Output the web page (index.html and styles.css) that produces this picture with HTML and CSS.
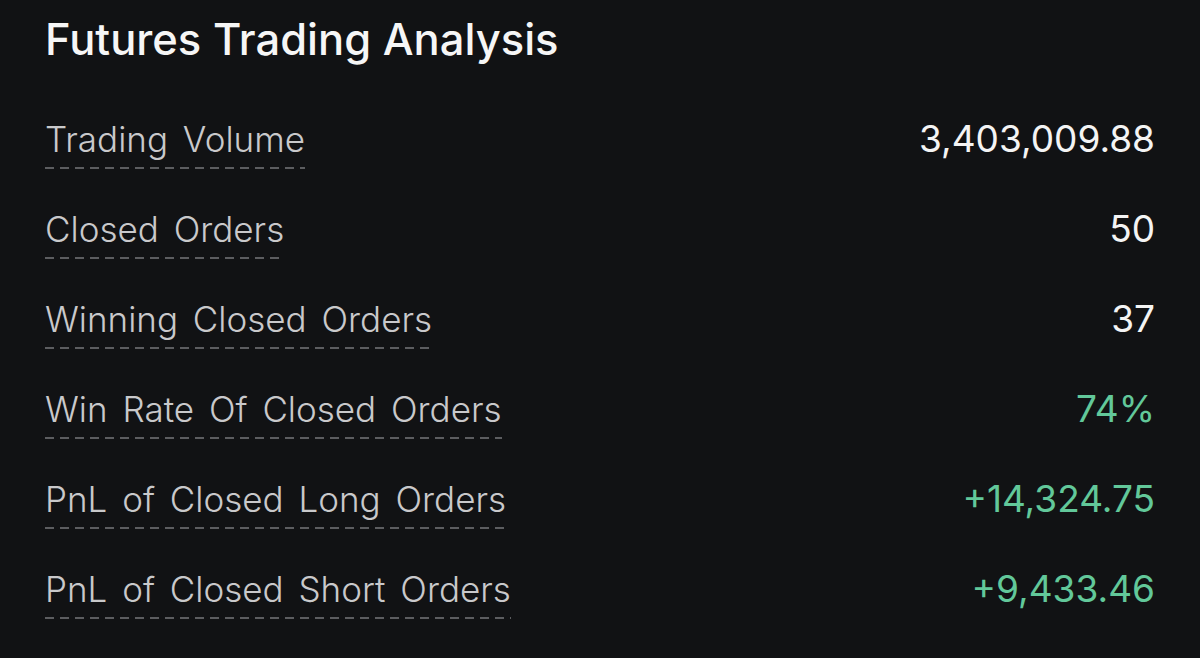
FILE: index.html
```html
<!DOCTYPE html>
<html lang="en">
<head>
<meta charset="utf-8">
<title>Futures Trading Analysis</title>
<link rel="stylesheet" href="styles.css">
</head>
<body>
<main class="panel">
  <h1 class="title">Futures Trading Analysis</h1>
  <ul class="stats">
    <li class="row"><span class="label">Trading Volume</span><span class="value">3,403,009.88</span></li>
    <li class="row"><span class="label">Closed Orders</span><span class="value">50</span></li>
    <li class="row"><span class="label">Winning Closed Orders</span><span class="value">37</span></li>
    <li class="row"><span class="label">Win Rate Of Closed Orders</span><span class="value up">74%</span></li>
    <li class="row"><span class="label">PnL of Closed Long Orders</span><span class="value up">+14,324.75</span></li>
    <li class="row"><span class="label">PnL of Closed Short Orders</span><span class="value up">+9,433.46</span></li>
  </ul>
</main>
</body>
</html>
```

FILE: styles.css
```css
html, body {
  margin: 0;
  padding: 0;
  background: #111214;
  height: 100%;
}
body {
  font-family: Inter, "Noto Sans", sans-serif;
  color: #f2f2f2;
}
.panel {
  padding: 13px 45px 0 45px;
}
.title {
  margin: 0;
  font-size: 43.5px;
  font-weight: 500;
  line-height: 52px;
  color: #f6f6f6;
}
.stats {
  list-style: none;
  margin: 52px 0 0 0;
  padding: 0;
}
.row {
  display: flex;
  justify-content: space-between;
  align-items: baseline;
  height: 90px;
}
.label {
  font-size: 35px;
  font-weight: 300;
  line-height: 44px;
  word-spacing: 5px;
  color: #c9c9cb;
  padding-bottom: 8px;
  background-image: repeating-linear-gradient(to right, #5c5d60 0 9px, transparent 9px 15px);
  background-size: 100% 2px;
  background-repeat: no-repeat;
  background-position: left bottom;
}
.value {
  font-size: 37px;
  font-weight: 400;
  line-height: 44px;
  color: #f4f4f4;
}
.value.up {
  color: #62c89a;
}
```
